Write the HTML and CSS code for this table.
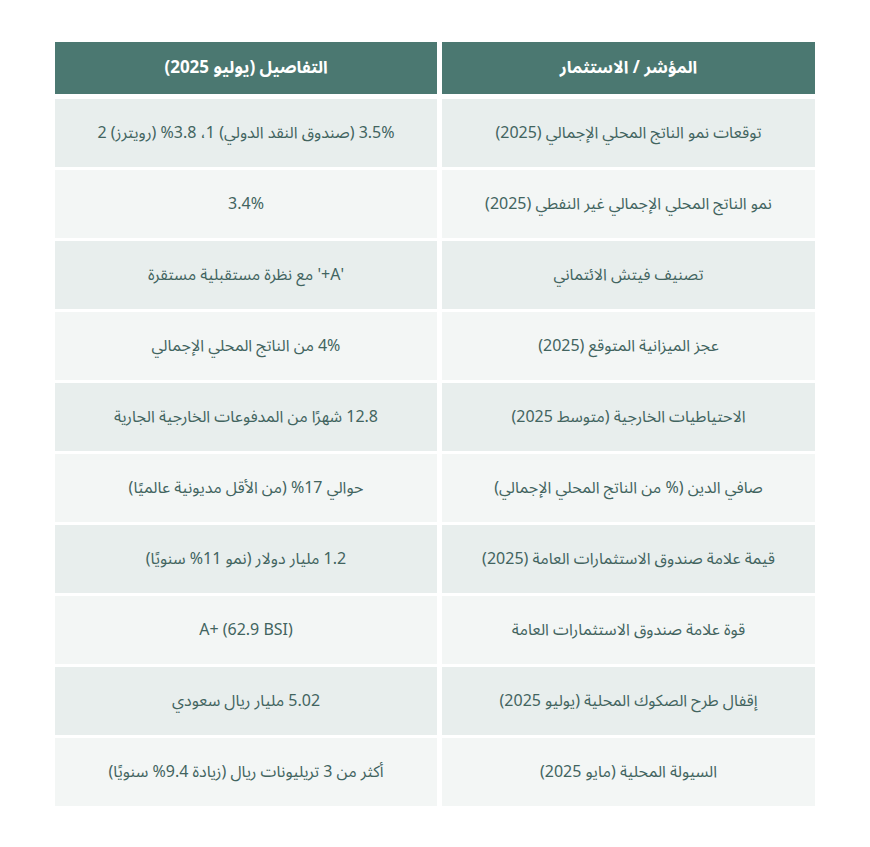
FILE: index.html
```html
<!DOCTYPE html>
<html lang="ar" dir="rtl">
<head>
<meta charset="utf-8">
<link rel="stylesheet" href="styles.css">
</head>
<body>
<div class="table">
  <div class="head">المؤشر / الاستثمار</div>
  <div class="head">التفاصيل (يوليو 2025)</div>

  <div class="cell odd">توقعات نمو الناتج المحلي الإجمالي (2025)</div>
  <div class="cell odd">3.5% (صندوق النقد الدولي) 1، 3.8% (رويترز) 2</div>

  <div class="cell even">نمو الناتج المحلي الإجمالي غير النفطي (2025)</div>
  <div class="cell even">3.4%</div>

  <div class="cell odd">تصنيف فيتش الائتماني</div>
  <div class="cell odd">'A+' مع نظرة مستقبلية مستقرة</div>

  <div class="cell even">عجز الميزانية المتوقع (2025)</div>
  <div class="cell even">4% من الناتج المحلي الإجمالي</div>

  <div class="cell odd">الاحتياطيات الخارجية (متوسط 2025)</div>
  <div class="cell odd">12.8 شهرًا من المدفوعات الخارجية الجارية</div>

  <div class="cell even">صافي الدين (% من الناتج المحلي الإجمالي)</div>
  <div class="cell even">حوالي 17% (من الأقل مديونية عالميًا)</div>

  <div class="cell odd">قيمة علامة صندوق الاستثمارات العامة (2025)</div>
  <div class="cell odd">1.2 مليار دولار (نمو 11% سنويًا)</div>

  <div class="cell even">قوة علامة صندوق الاستثمارات العامة</div>
  <div class="cell even" dir="ltr">A+ (62.9 BSI)</div>

  <div class="cell odd">إقفال طرح الصكوك المحلية (يوليو 2025)</div>
  <div class="cell odd">5.02 مليار ريال سعودي</div>

  <div class="cell even">السيولة المحلية (مايو 2025)</div>
  <div class="cell even">أكثر من 3 تريليونات ريال (زيادة 9.4% سنويًا)</div>
</div>
</body>
</html>
```
FILE: styles.css
```css
html, body {
  margin: 0;
  padding: 0;
  background: #ffffff;
}
body {
  font-family: "Noto Sans Arabic", "Noto Sans", "DejaVu Sans", sans-serif;
  color: #42645f;
}
.table {
  width: 760px;
  margin: 42px auto 0;
  display: grid;
  grid-template-columns: 373px 382px;
  column-gap: 5px;
  row-gap: 3px;
}
.head {
  height: 52px;
  background: #4b7871;
  color: #ffffff;
  font-weight: bold;
  font-size: 17px;
  display: flex;
  align-items: center;
  justify-content: center;
  margin-bottom: 2px;
}
.cell {
  height: 68px;
  display: flex;
  align-items: center;
  justify-content: center;
  font-size: 16px;
  text-align: center;
}
.odd {
  background: #e8eeed;
}
.even {
  background: #f3f6f5;
}
```
